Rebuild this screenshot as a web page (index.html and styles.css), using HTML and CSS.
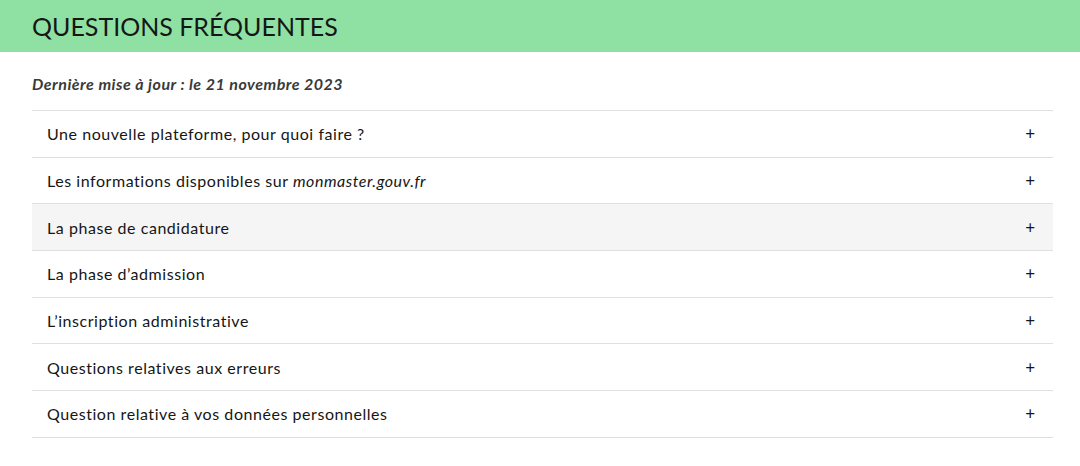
FILE: index.html
```html
<!DOCTYPE html>
<html lang="fr">
<head>
<meta charset="UTF-8" />
<meta name="viewport" content="width=device-width, initial-scale=1" />
<title>Questions fréquentes</title>
<link rel="stylesheet" href="styles.css">
</head>
<body>

<header class="banner">
  <h1>QUESTIONS FRÉQUENTES</h1>
</header>

<main class="faq">
  <p class="updated">Dernière mise à jour : le 21 novembre 2023</p>
  <ul class="accordion">
    <li class="item"><span>Une nouvelle plateforme, pour quoi faire ?</span><span class="plus">+</span></li>
    <li class="item"><span>Les informations disponibles sur <em>monmaster.gouv.fr</em></span><span class="plus">+</span></li>
    <li class="item hover"><span>La phase de candidature</span><span class="plus">+</span></li>
    <li class="item"><span>La phase d’admission</span><span class="plus">+</span></li>
    <li class="item"><span>L’inscription administrative</span><span class="plus">+</span></li>
    <li class="item"><span>Questions relatives aux erreurs</span><span class="plus">+</span></li>
    <li class="item"><span>Question relative à vos données personnelles</span><span class="plus">+</span></li>
  </ul>
</main>

</body>
</html>
```

FILE: styles.css
```css
body { margin: 0; font-family: Lato, "Noto Sans", sans-serif; color: #161616; background: white; }
.banner { background: #8fe1a3; height: 52px; padding: 0 32px; display: flex; align-items: center; }
.banner h1 { margin: 0; font-weight: 400; font-size: 25px; letter-spacing: 0; }
.faq { padding: 0 27px 0 32px; }
.updated { margin: 22px 0 17px; font-size: 16px; font-weight: 700; font-style: italic; color: #3a3a3a; letter-spacing: 0.5px; }
.accordion { list-style: none; margin: 0; padding: 0; border-top: 1px solid #e0e0e0; }
.item { display: flex; justify-content: space-between; align-items: center; height: 45.7px; padding: 0 18px 0 15px; border-bottom: 1px solid #e0e0e0; font-size: 16px; letter-spacing: 0.55px; }
.item.hover { background: #f5f5f5; }
.plus { font-size: 17px; letter-spacing: 0; }
```
